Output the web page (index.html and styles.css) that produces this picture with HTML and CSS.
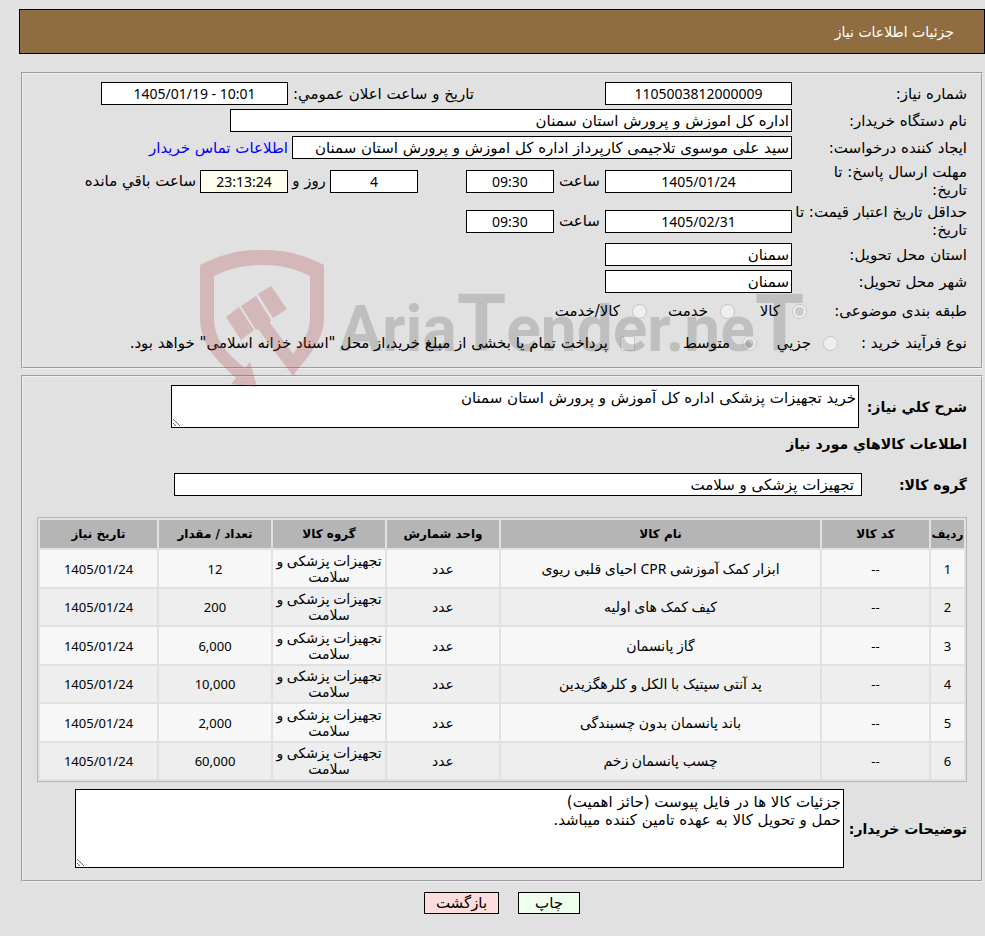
FILE: index.html
```html
<!DOCTYPE html>
<html lang="fa" dir="rtl">
<head>
    <meta charset="UTF-8">
    <meta name="viewport" content="width=device-width, initial-scale=1.0">
    <title>جزئیات اطلاعات نیاز</title>
    <link rel="stylesheet" href="styles.css">
</head>
<body>
    <div class="page">
        <h1 class="banner">جزئیات اطلاعات نیاز</h1>

        <fieldset class="box info">
            <div class="row">
                <label class="caption" for="needNo">شماره نیاز:</label>
                <input class="field w-md" type="text" id="needNo" value="1105003812000009" readonly>
                <label class="announce" for="announceDate">تاریخ و ساعت اعلان عمومي:</label>
                <input class="field w-md" type="text" id="announceDate" value="1405/01/19 - 10:01" dir="ltr" readonly>
            </div>
            <div class="row">
                <label class="caption" for="buyer">نام دستگاه خریدار:</label>
                <input class="field w-xl text" type="text" id="buyer" value="اداره کل اموزش و پرورش استان سمنان" readonly>
            </div>
            <div class="row">
                <label class="caption" for="creator">ایجاد کننده درخواست:</label>
                <input class="field w-lg text" type="text" id="creator" value="سید علی موسوی تلاجیمی کارپرداز اداره کل اموزش و پرورش استان سمنان" readonly>
                <a class="contact" href="#">اطلاعات تماس خریدار</a>
            </div>
            <div class="row">
                <label class="caption" for="replyDate">مهلت ارسال پاسخ: تا<br>تاریخ:</label>
                <input class="field w-md" type="text" id="replyDate" value="1405/01/24" readonly>
                <label class="mid" for="replyTime">ساعت</label>
                <input class="field w-sm" type="text" id="replyTime" value="09:30" readonly>
                <input class="field w-sm days" type="text" id="daysLeft" value="4" aria-label="روز" readonly>
                <label class="mid narrow" for="daysLeft">روز و</label>
                <input class="field w-sm timer" type="text" id="timeLeft" value="23:13:24" readonly>
                <label class="after" for="timeLeft">ساعت باقي مانده</label>
            </div>
            <div class="row">
                <label class="caption" for="priceDate">حداقل تاریخ اعتبار قیمت: تا<br>تاریخ:</label>
                <input class="field w-md" type="text" id="priceDate" value="1405/02/31" readonly>
                <label class="mid" for="priceTime">ساعت</label>
                <input class="field w-sm" type="text" id="priceTime" value="09:30" readonly>
            </div>
            <div class="row">
                <label class="caption" for="province">استان محل تحویل:</label>
                <input class="field w-md text" type="text" id="province" value="سمنان" readonly>
            </div>
            <div class="row">
                <label class="caption" for="city">شهر محل تحویل:</label>
                <input class="field w-md text" type="text" id="city" value="سمنان" readonly>
            </div>
            <div class="options subject">
                <span>طبقه بندی موضوعی:</span>
                <label><input type="radio" name="subject" checked disabled>کالا</label>
                <label><input type="radio" name="subject" disabled>خدمت</label>
                <label><input type="radio" name="subject" disabled>کالا/خدمت</label>
            </div>
            <div class="options process">
                <span>نوع فرآیند خرید :</span>
                <label><input type="radio" name="process" disabled>جزیي</label>
                <label><input type="radio" name="process" checked disabled>متوسط</label>
                <label><input type="checkbox" disabled>پرداخت تمام یا بخشی از مبلغ خرید،از محل "اسناد خزانه اسلامی" خواهد بود.</label>
            </div>
        </fieldset>

        <fieldset class="box goods">
            <div class="wide">
                <label for="summary">شرح کلي نیاز:</label>
                <textarea class="area summary" id="summary" readonly>خرید تجهیزات پزشکی اداره کل آموزش و پرورش استان سمنان</textarea>
            </div>
            <h2>اطلاعات کالاهاي مورد نیاز</h2>
            <div class="wide group">
                <label for="group">گروه کالا:</label>
                <input class="field text" type="text" id="group" value="تجهیزات پزشکی و سلامت" readonly>
            </div>

            <table class="items">
                <colgroup>
                    <col class="c-row">
                    <col class="c-code">
                    <col>
                    <col class="c-unit">
                    <col class="c-unit">
                    <col class="c-unit">
                    <col class="c-date">
                </colgroup>
                <thead>
                    <tr>
                        <th>ردیف</th>
                        <th>کد کالا</th>
                        <th>نام کالا</th>
                        <th>واحد شمارش</th>
                        <th>گروه کالا</th>
                        <th>تعداد / مقدار</th>
                        <th>تاریخ نیاز</th>
                    </tr>
                </thead>
                <tbody>
                    <tr>
                        <td>1</td>
                        <td>--</td>
                        <td class="word">ابزار کمک آموزشی CPR احیای قلبی ریوی</td>
                        <td class="word">عدد</td>
                        <td class="word">تجهیزات پزشکی و<br>سلامت</td>
                        <td>12</td>
                        <td>1405/01/24</td>
                    </tr>
                    <tr>
                        <td>2</td>
                        <td>--</td>
                        <td class="word">کیف کمک های اولیه</td>
                        <td class="word">عدد</td>
                        <td class="word">تجهیزات پزشکی و<br>سلامت</td>
                        <td>200</td>
                        <td>1405/01/24</td>
                    </tr>
                    <tr>
                        <td>3</td>
                        <td>--</td>
                        <td class="word">گاز پانسمان</td>
                        <td class="word">عدد</td>
                        <td class="word">تجهیزات پزشکی و<br>سلامت</td>
                        <td>6,000</td>
                        <td>1405/01/24</td>
                    </tr>
                    <tr>
                        <td>4</td>
                        <td>--</td>
                        <td class="word">پد آنتی سپتیک با الکل و کلرهگزیدین</td>
                        <td class="word">عدد</td>
                        <td class="word">تجهیزات پزشکی و<br>سلامت</td>
                        <td>10,000</td>
                        <td>1405/01/24</td>
                    </tr>
                    <tr>
                        <td>5</td>
                        <td>--</td>
                        <td class="word">باند پانسمان بدون چسبندگی</td>
                        <td class="word">عدد</td>
                        <td class="word">تجهیزات پزشکی و<br>سلامت</td>
                        <td>2,000</td>
                        <td>1405/01/24</td>
                    </tr>
                    <tr>
                        <td>6</td>
                        <td>--</td>
                        <td class="word">چسب پانسمان زخم</td>
                        <td class="word">عدد</td>
                        <td class="word">تجهیزات پزشکی و<br>سلامت</td>
                        <td>60,000</td>
                        <td>1405/01/24</td>
                    </tr>
                </tbody>
            </table>

            <div class="wide">
                <label for="notes">توضیحات خریدار:</label>
                <textarea class="area notes" id="notes" readonly>جزئیات کالا ها در فایل پیوست (حائز اهمیت)
حمل و تحویل کالا به عهده تامین کننده میباشد.</textarea>
            </div>
        </fieldset>

        <div class="actions">
            <button type="button" class="print">چاپ</button>
            <button type="button" class="back">بازگشت</button>
        </div>

        <svg class="watermark" width="610" height="142" viewBox="0 0 610 142" direction="ltr" aria-hidden="true">
            <g class="shield">
                <path d="M1 16C24 4 43 1 63 1S102 4 125 16V69C125 92 108 108 94 127L59 80 57 81 42 57 57 47 72 71 71 74 94 105C104 92 111 84 111 69V27C95 19 80 16 63 16S31 19 15 27V69C15 92 30 106 46 119L51 113 58 138 32 135 37 129C20 113 1 97 1 69Z"/>
                <path d="M27 68L40 58 55 81 42 91ZM59 45L72 37 88 60 74 69Z"/>
            </g>
            <text class="wordmark" x="140" y="102">Aria<tspan class="tall">T</tspan>ender.ne<tspan class="tall">T</tspan></text>
        </svg>
    </div>
</body>
</html>
```
FILE: styles.css
```css
* {
    box-sizing: border-box;
}
body {
    margin: 0;
    background-color: #e1e1e1;
    color: #000;
    font-family: "DejaVu Sans", Tahoma, sans-serif;
    font-size: 15px;
    line-height: 18px;
}
input, textarea, button {
    font: inherit;
    color: inherit;
}
.page {
    position: relative;
    padding: 9px 0 22px 19px;
}
.banner {
    margin: 0 0 18px;
    padding: 13px 30px 12px;
    border: 1px solid #000;
    background-color: #8f6d40;
    color: #fff;
    font-size: 14px;
    font-weight: normal;
}
.box {
    min-width: 0;
    margin: 0 2px 6px;
    padding: 8px 14px;
    border: 2px groove #f0f0f0;
}
.info {
    display: flex;
    flex-direction: column;
    gap: 4px;
    padding-bottom: 10px;
}
.row {
    display: flex;
    align-items: center;
    white-space: nowrap;
}
.caption {
    width: 175px;
}
.field {
    height: 23px;
    padding: 0 2px;
    border: 1px solid #000;
    border-radius: 0;
    background-color: #fff;
    font-family: "Noto Sans", "DejaVu Sans", sans-serif;
    font-size: 14px;
    text-align: center;
}
.field.text {
    font-family: "DejaVu Sans", Tahoma, sans-serif;
    font-size: 15px;
    text-align: right;
}
.w-sm {
    width: 88px;
}
.w-md {
    width: 187px;
}
.w-lg {
    width: 500px;
}
.w-xl {
    width: 562px;
}
.announce {
    width: 186px;
    margin-right: 131px;
}
.contact {
    margin-right: 4px;
    color: #00f;
    text-decoration: none;
}
.mid {
    width: 51px;
    text-align: center;
}
.mid.narrow {
    width: 42px;
}
.days {
    margin-right: 48px;
}
.timer {
    background-color: #ffffee;
}
.after {
    margin-right: 4px;
}
.options {
    display: grid;
    align-items: center;
    min-height: 28px;
    white-space: nowrap;
}
.subject {
    grid-template-columns: 160px 72px 88px auto;
}
.process {
    grid-template-columns: 129px 81px 122px auto;
}
.options label {
    display: flex;
    align-items: center;
    gap: 12px;
}
.options input {
    width: 15px;
    height: 15px;
    margin: 0;
}
.wide {
    display: flex;
    align-items: center;
    gap: 5px;
    font-size: 14px;
    font-weight: bold;
    white-space: nowrap;
}
.wide label {
    flex: 1;
}
.area {
    padding: 3px 2px;
    border: 1px solid #000;
    border-radius: 0;
    background-color: #fff;
    font-size: 15px;
    font-weight: normal;
    resize: both;
}
.summary {
    width: 688px;
    height: 43px;
    margin-left: 134px;
}
.goods {
    padding-bottom: 12px;
}
.goods h2 {
    margin: 7px 0 20px;
    font-size: 14px;
    line-height: 18px;
}
.group .field {
    width: 688px;
    margin-left: 137px;
    padding-right: 7px;
    font-weight: normal;
}
.items {
    width: 100%;
    margin: 21px 0 7px;
    border: 1px solid #b5b5b5;
    border-collapse: separate;
    border-spacing: 2px;
    table-layout: fixed;
    font-size: 13px;
    line-height: 16px;
    text-align: center;
}
.items th {
    height: 28px;
    padding: 0;
    background-color: #b5b5b5;
    font-size: 12px;
    white-space: nowrap;
}
.items td {
    height: 36px;
    padding: 0 2px;
    background-color: #eee;
    font-family: "Noto Sans", "DejaVu Sans", sans-serif;
    white-space: nowrap;
}
.items tr:nth-child(odd) td {
    height: 37px;
    background-color: #f7f7f7;
}
.items .word {
    font-size: 14px;
}
.c-row {
    width: 33px;
}
.c-code {
    width: 107px;
}
.c-unit {
    width: 112px;
}
.c-date {
    width: 117px;
}
.notes {
    width: 769px;
    height: 79px;
    margin-left: 38px;
}
.actions {
    display: flex;
    justify-content: center;
    gap: 19px;
    padding-top: 4px;
}
.actions button {
    height: 22px;
    padding: 0 10px;
    border: 1px solid #000;
    border-radius: 0;
    cursor: pointer;
}
.actions .print {
    min-width: 62px;
    background-color: #eeffee;
}
.actions .back {
    min-width: 75px;
    background-color: #ffdddd;
}
.watermark {
    position: absolute;
    top: 249px;
    left: 199px;
    direction: ltr;
    pointer-events: none;
}
.shield {
    fill: rgba(177, 61, 65, 0.25);
}
.wordmark {
    direction: ltr;
    fill: rgba(0, 0, 0, 0.15);
    font-family: Roboto, "Liberation Sans", sans-serif;
    font-size: 64px;
    font-weight: bold;
}
.tall {
    font-size: 80px;
}
```
